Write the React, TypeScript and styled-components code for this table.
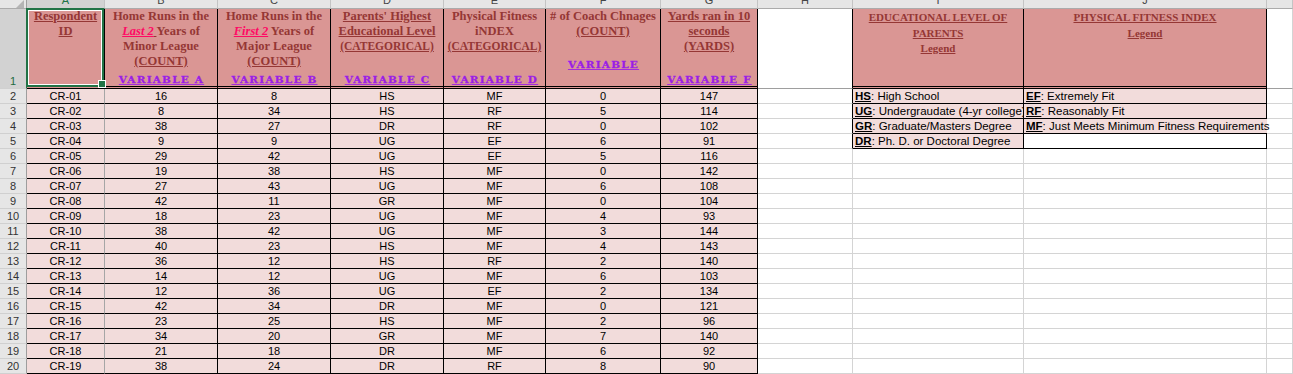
import React from "react";
import styled, { createGlobalStyle } from "styled-components";

const GlobalStyle = createGlobalStyle`
  html, body { margin: 0; padding: 0; background: #fff; overflow: hidden; }
  body { font-family: "Liberation Sans", Arial, sans-serif; }
`;

const Sheet = styled.div`
  display: grid;
  grid-template-columns: 27px 78px 113px 113px 113px 102px 115px 97px 95px 171px 243px 1fr;
  grid-template-rows: 9px 80px repeat(19, 15px);
  width: 1293px;
  height: 374px;
  overflow: hidden;
  background: #fff;
`;

const Corner = styled.div`
  box-sizing: border-box;
  background: #e6e6e6;
  border-right: 1px solid #9e9e9e;
  border-bottom: 1px solid #ababab;
  display: flex;
  justify-content: flex-end;
  align-items: flex-end;
`;

const ColLetter = styled.div<{ $sel?: boolean }>`
  box-sizing: border-box;
  background: ${(p) => (p.$sel ? "#d2d2d2" : "#e6e6e6")};
  border-right: 1px solid #c4c4c4;
  border-bottom: 1px solid ${(p) => (p.$sel ? "#217346" : "#ababab")};
  color: ${(p) => (p.$sel ? "#217346" : "#444")};
  overflow: hidden;
  text-align: center;
`;

const Letter = styled.span`
  display: block;
  margin-top: -8px;
  font: 11px/16px "Liberation Sans", Arial, sans-serif;
`;

const RowNum = styled.div<{ $sel?: boolean }>`
  box-sizing: border-box;
  display: flex;
  align-items: flex-end;
  justify-content: center;
  background: ${(p) => (p.$sel ? "#d2d2d2" : "#e6e6e6")};
  border-right: 1px solid ${(p) => (p.$sel ? "#217346" : "#9e9e9e")};
  border-bottom: 1px solid #d0d0d0;
  color: ${(p) => (p.$sel ? "#1e6b41" : "#333")};
  font: 11px/14px "Liberation Sans", Arial, sans-serif;
`;

const HeadCell = styled.div<{ $legend?: boolean }>`
  position: relative;
  box-sizing: border-box;
  display: flex;
  flex-direction: column;
  align-items: center;
  background: #da9694;
  border-right: 1px solid #000;
  border-bottom: 3px double #000;
  color: #953735;
  font-family: "Liberation Serif", "Times New Roman", serif;
  font-weight: bold;
  font-size: ${(p) => (p.$legend ? "11px" : "12.5px")};
  line-height: ${(p) => (p.$legend ? "15.5px" : "15px")};
  padding-top: ${(p) => (p.$legend ? "1px" : "0")};
  text-align: center;
  white-space: nowrap;
`;

const Line = styled.span<{ $u?: boolean; $caps?: boolean }>`
  display: block;
  text-decoration: ${(p) => (p.$u ? "underline" : "none")};
  font-size: ${(p) => (p.$caps ? "11.5px" : "inherit")};
`;

const Under = styled.span`
  text-decoration: underline;
`;

const Pink = styled.span`
  color: #ff0a64;
  font-style: italic;
  text-decoration: underline;
`;

const VarLabel = styled.span<{ $raised?: boolean }>`
  display: block;
  margin-top: auto;
  margin-bottom: ${(p) => (p.$raised ? "16px" : "1px")};
  padding-left: 1px;
  font: 900 10.5px/12px "DejaVu Serif", serif;
  letter-spacing: 1.2px;
  -webkit-text-stroke: 0.3px #9a1ee6;
  color: #9a1ee6;
  text-decoration: underline;
  transform: scaleY(0.86);
  transform-origin: center bottom;
`;

const Selection = styled.div`
  position: absolute;
  top: -1px;
  left: -1px;
  right: 0;
  bottom: -1px;
  border: 2px solid #217346;
  box-shadow: inset 0 0 0 1px #fff;
  pointer-events: none;
  z-index: 2;
`;

const FillHandle = styled.div`
  position: absolute;
  right: -1px;
  bottom: -1px;
  width: 6px;
  height: 6px;
  background: #217346;
  box-shadow: 0 0 0 1px #fff;
  z-index: 3;
`;

const DataCell = styled.div<{ $first?: boolean }>`
  box-sizing: border-box;
  background: #f2dcdb;
  border-right: 1px solid ${(p) => (p.$first ? "#a6a6a6" : "#000")};
  border-bottom: 1px solid #000;
  color: #000;
  font: 11px/14px "Liberation Sans", Arial, sans-serif;
  text-align: center;
  white-space: nowrap;
  overflow: hidden;
`;

const BlankCell = styled.div<{ $edge?: boolean; $head?: boolean }>`
  box-sizing: border-box;
  background: #fff;
  border-right: 1px solid ${(p) => (p.$edge ? "#000" : "#d4d4d4")};
  border-bottom: 1px solid ${(p) => (p.$head ? "#9e9e9e" : "#d4d4d4")};
`;

const LegendCell = styled.div<{ $blank?: boolean; $spill?: boolean }>`
  position: ${(p) => (p.$spill ? "relative" : "static")};
  z-index: ${(p) => (p.$spill ? 1 : "auto")};
  box-sizing: border-box;
  background: ${(p) => (p.$blank ? "#fff" : "#f2dcdb")};
  border-right: ${(p) => (p.$spill ? "none" : "1px solid #000")};
  border-bottom: 1px solid #000;
  padding-left: 2px;
  color: #000;
  font: 11.5px/14px "Liberation Sans", Arial, sans-serif;
  white-space: nowrap;
  overflow: ${(p) => (p.$spill ? "visible" : "hidden")};
`;

const Code = styled.b`
  text-decoration: underline;
`;

const letters = ["A", "B", "C", "D", "E", "F", "G", "H", "I", "J", ""];

const rows: (string | number)[][] = [
  ["CR-01", 16, 8, "HS", "MF", 0, 147],
  ["CR-02", 8, 34, "HS", "RF", 5, 114],
  ["CR-03", 38, 27, "DR", "RF", 0, 102],
  ["CR-04", 9, 9, "UG", "EF", 6, 91],
  ["CR-05", 29, 42, "UG", "EF", 5, 116],
  ["CR-06", 19, 38, "HS", "MF", 0, 142],
  ["CR-07", 27, 43, "UG", "MF", 6, 108],
  ["CR-08", 42, 11, "GR", "MF", 0, 104],
  ["CR-09", 18, 23, "UG", "MF", 4, 93],
  ["CR-10", 38, 42, "UG", "MF", 3, 144],
  ["CR-11", 40, 23, "HS", "MF", 4, 143],
  ["CR-12", 36, 12, "HS", "RF", 2, 140],
  ["CR-13", 14, 12, "UG", "MF", 6, 103],
  ["CR-14", 12, 36, "UG", "EF", 2, 134],
  ["CR-15", 42, 34, "DR", "MF", 0, 121],
  ["CR-16", 23, 25, "HS", "MF", 2, 96],
  ["CR-17", 34, 20, "GR", "MF", 7, 140],
  ["CR-18", 21, 18, "DR", "MF", 6, 92],
  ["CR-19", 38, 24, "DR", "RF", 8, 90],
];

const eduLegend = [
  ["HS", "High School"],
  ["UG", "Undergraudate (4-yr college)"],
  ["GR", "Graduate/Masters Degree"],
  ["DR", "Ph. D. or Doctoral Degree"],
];

const fitLegend = [
  ["EF", "Extremely Fit"],
  ["RF", "Reasonably Fit"],
  ["MF", "Just Meets Minimum Fitness Requirements"],
];

export default function App() {
  return (
    <>
      <GlobalStyle />
      <Sheet>
        <Corner>
          <svg width="10" height="8" viewBox="0 0 10 8">
            <polygon points="8,0 8,8 0,8" fill="#b4b4b4" />
          </svg>
        </Corner>
        {letters.map((l, i) => (
          <ColLetter key={i} $sel={i === 0}>
            <Letter>{l}</Letter>
          </ColLetter>
        ))}

        <RowNum $sel>1</RowNum>
        <HeadCell>
          <Line $u>Respondent </Line>
          <Line $u>ID</Line>
          <Selection />
          <FillHandle />
        </HeadCell>
        <HeadCell>
          <Line>Home Runs in the</Line>
          <Line>
            <Pink>Last 2</Pink>
            <Under> </Under> Years of
          </Line>
          <Line>Minor League</Line>
          <Line $u>(COUNT)</Line>
          <VarLabel>VARIABLE A</VarLabel>
        </HeadCell>
        <HeadCell>
          <Line>Home Runs in the</Line>
          <Line>
            <Pink>First 2</Pink> Years of
          </Line>
          <Line>Major League</Line>
          <Line $u>(COUNT)</Line>
          <VarLabel>VARIABLE B</VarLabel>
        </HeadCell>
        <HeadCell>
          <Line $u>Parents' Highest </Line>
          <Line $u>Educational Level</Line>
          <Line $u $caps>(CATEGORICAL) </Line>
          <VarLabel>VARIABLE C</VarLabel>
        </HeadCell>
        <HeadCell>
          <Line>Physical Fitness</Line>
          <Line>iNDEX</Line>
          <Line $u $caps>(CATEGORICAL) </Line>
          <VarLabel>VARIABLE D</VarLabel>
        </HeadCell>
        <HeadCell>
          <Line># of Coach Chnages</Line>
          <Line $u>(COUNT) </Line>
          <VarLabel $raised>VARIABLE</VarLabel>
        </HeadCell>
        <HeadCell>
          <Line $u>Yards ran in 10 </Line>
          <Line $u>seconds</Line>
          <Line $u>(YARDS) </Line>
          <VarLabel>VARIABLE F</VarLabel>
        </HeadCell>
        <BlankCell $head $edge />
        <HeadCell $legend>
          <Line $u>EDUCATIONAL LEVEL OF </Line>
          <Line $u>PARENTS</Line>
          <Line $u>Legend</Line>
        </HeadCell>
        <HeadCell $legend>
          <Line $u>PHYSICAL FITNESS INDEX</Line>
          <Line $u>Legend</Line>
        </HeadCell>
        <BlankCell $head />

        {rows.map((r, ri) => {
          const edu = eduLegend[ri];
          const fit = fitLegend[ri];
          const inLegend = ri < 4;
          return (
            <React.Fragment key={ri}>
              <RowNum>{ri + 2}</RowNum>
              {r.map((v, ci) => (
                <DataCell key={ci} $first={ci === 0}>
                  {v}
                </DataCell>
              ))}
              <BlankCell $edge={inLegend} />
              {inLegend ? (
                <>
                  <LegendCell>
                    <Code>{edu[0]}</Code>: {edu[1]}
                  </LegendCell>
                  {fit ? (
                    <LegendCell $spill={ri === 2}>
                      <Code>{fit[0]}</Code>: {fit[1]}
                    </LegendCell>
                  ) : (
                    <LegendCell $blank />
                  )}
                </>
              ) : (
                <>
                  <BlankCell />
                  <BlankCell />
                </>
              )}
              <BlankCell />
            </React.Fragment>
          );
        })}
      </Sheet>
    </>
  );
}
